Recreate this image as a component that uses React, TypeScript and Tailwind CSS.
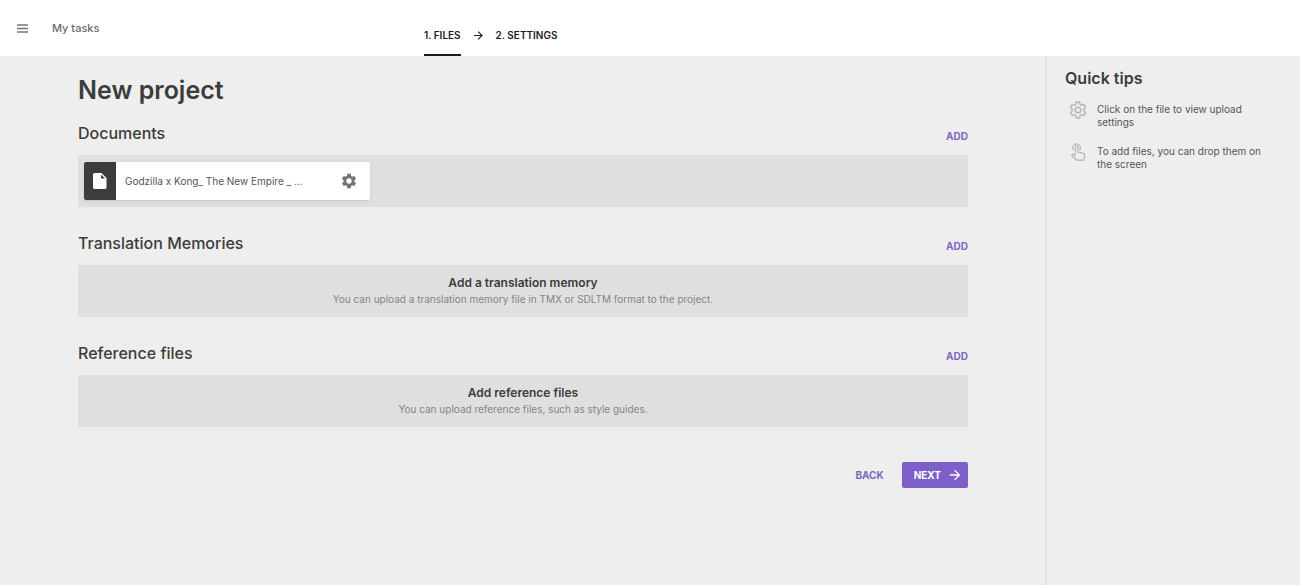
import React from "react";
import { MdArrowForward, MdSettings } from "react-icons/md";

const sections = [
  {
    title: "Documents",
    files: ["Godzilla x Kong_ The New Empire _ ..."],
  },
  {
    title: "Translation Memories",
    heading: "Add a translation memory",
    text: "You can upload a translation memory file in TMX or SDLTM format to the project.",
  },
  {
    title: "Reference files",
    heading: "Add reference files",
    text: "You can upload reference files, such as style guides.",
  },
];

const MenuIcon = () => (
  <svg width="11" height="9" viewBox="0 0 11 9" stroke="currentColor" strokeWidth="1.5">
    <path d="M0 1H11M0 4.5H11M0 8H11" />
  </svg>
);

const FileIcon = () => (
  <svg width="14" height="16" viewBox="0 0 14 16" fill="white">
    <path d="M1.5 0H8.5L13.5 5V14.5a1.5 1.5 0 0 1-1.5 1.5H1.5A1.5 1.5 0 0 1 0 14.5v-13A1.5 1.5 0 0 1 1.5 0Z" />
    <path d="M8 1.5V5.5H12Z" fill="#3c3c3c" />
  </svg>
);

const GearIcon = () => (
  <svg width="18" height="18" viewBox="0 0 18 18" fill="none" stroke="#b4b4b4" strokeWidth="1.4" strokeLinejoin="round">
    <path d="M7.4 1h3.2l.5 2.4 1.6.9 2.3-.8 1.6 2.8-1.8 1.6v2.2l1.8 1.6-1.6 2.8-2.3-.8-1.6.9-.5 2.4H7.4l-.5-2.4-1.6-.9-2.3.8-1.6-2.8 1.8-1.6V7.9L1.4 6.3 3 3.5l2.3.8 1.6-.9Z" />
    <circle cx="9" cy="9" r="2.8" />
  </svg>
);

const TouchIcon = () => (
  <svg width="18" height="18" viewBox="0 0 18 18" fill="none" stroke="#b4b4b4" strokeWidth="1.2" strokeLinejoin="round" strokeLinecap="round">
    <path d="M4.4 6.6a3.7 3.7 0 1 1 6.4 0" />
    <path d="M6.3 12.2V4.4a1.3 1.3 0 0 1 2.6 0v4.4l5.6 1.5c.8.2 1.2.8 1.1 1.6l-.6 5.3H8L2.6 12.2l1-.9Z" />
  </svg>
);

const tips = [
  { icon: <GearIcon />, text: "Click on the file to view upload settings" },
  { icon: <TouchIcon />, text: "To add files, you can drop them on the screen" },
];

const FileCard = ({ name }: { name: string }) => (
  <div className="flex h-[38px] w-[286px] items-center overflow-hidden rounded-xs bg-white shadow-sm">
    <div className="flex h-full w-8 items-center justify-center bg-[#3c3c3c]">
      <FileIcon />
    </div>
    <span className="flex-1 truncate pl-[9px] text-[10px] text-[#555]">{name}</span>
    <button aria-label="File settings" className="mr-3 text-[#757575]">
      <MdSettings size={18} />
    </button>
  </div>
);

const Header = () => (
  <header className="grid h-14 grid-cols-[424px_1fr] bg-white">
    <div className="flex items-center pl-[17px]">
      <button aria-label="Menu" className="text-[#757575]">
        <MenuIcon />
      </button>
      <a href="#" className="ml-6 text-[11px] font-medium text-[#6b6b6b]">
        My tasks
      </a>
    </div>
    <nav className="flex items-end text-[10px] font-semibold text-[#1c1c1e]">
      <a href="#" className="border-b-2 border-[#1c1c1e] pb-[11px] leading-4">
        1. FILES
      </a>
      <MdArrowForward size={13} className="mx-[11px] mb-[14px]" />
      <a href="#" className="pb-[13px] leading-4">
        2. SETTINGS
      </a>
    </nav>
  </header>
);

export default function App() {
  return (
    <div className="flex min-h-screen flex-col bg-[#eeeeee] font-['Inter',sans-serif] text-[#3c3c3c]">
      <Header />
      <div className="flex flex-1">
        <main className="flex-1 pt-4 pr-[77px] pl-[78px]">
          <h1 className="mb-1 text-[25px] leading-9 font-semibold">New project</h1>
          {sections.map((section) => (
            <section key={section.title} className="mb-[15px]">
              <div className="flex h-[43px] items-center justify-between pb-[2px]">
                <h2 className="text-base font-medium">{section.title}</h2>
                <button className="pt-2 text-[10px] font-bold text-[#7e67c1]">ADD</button>
              </div>
              <div className="flex h-[52px] flex-col justify-center bg-[#dfdfdf]">
                {section.files ? (
                  <div className="px-[6px]">
                    {section.files.map((file) => (
                      <FileCard key={file} name={file} />
                    ))}
                  </div>
                ) : (
                  <div className="text-center">
                    <h3 className="text-xs leading-4 font-semibold">{section.heading}</h3>
                    <p className="text-[10px] leading-4 text-[#858585]">{section.text}</p>
                  </div>
                )}
              </div>
            </section>
          ))}
          <div className="flex items-center justify-end gap-[18px] pt-5 text-[10px] font-bold">
            <button className="text-[#7e67c1]">BACK</button>
            <button className="flex h-[26px] items-center gap-[6px] rounded-xs bg-[#7e5fc9] pr-[5px] pl-3 text-white">
              NEXT
              <MdArrowForward size={16} />
            </button>
          </div>
        </main>
        <aside className="w-[255px] border-l-2 border-[#e4e4e4] pt-3 pl-[18px]">
          <h2 className="text-base leading-5 font-semibold">Quick tips</h2>
          <ul className="mt-[13px] flex flex-col gap-[14px]">
            {tips.map((tip) => (
              <li key={tip.text} className="flex gap-[10px] pr-6 pl-1">
                <span className="shrink-0">{tip.icon}</span>
                <p className="pt-[2px] text-[10px] leading-[13px] text-[#555]">{tip.text}</p>
              </li>
            ))}
          </ul>
        </aside>
      </div>
    </div>
  );
}
